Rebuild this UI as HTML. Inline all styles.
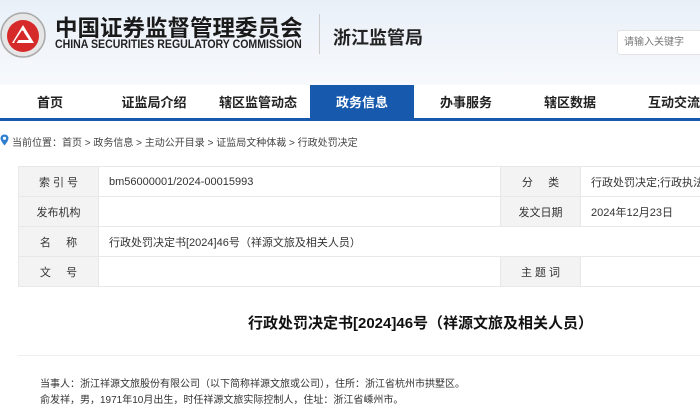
<!DOCTYPE html>
<html><head><meta charset="utf-8"><style>
*{margin:0;padding:0;box-sizing:border-box}
body{width:700px;height:408px;overflow:hidden;background:#fff;font-family:"Liberation Sans","Noto Sans CJK SC",sans-serif;position:relative;color:#333}
.hdr{position:absolute;left:0;top:0;width:700px;height:85px;background:linear-gradient(180deg,#e9f0f8,#f7f9fc)}
.abs{position:absolute;white-space:nowrap}
.nav{position:absolute;left:0;top:85px;width:700px;height:36px;background:#fff;border-bottom:3px solid #1659ad}
.nav div{position:absolute;top:0;height:36px;line-height:36px;font-size:13px;font-weight:bold;color:#222;text-align:center;width:104px}
.nav .on{background:#1659ad;color:#fff}
table{position:absolute;left:18px;top:166px;width:700px;border-collapse:collapse;font-size:11px;table-layout:fixed}
td{border:1px solid #e8e8e8;height:30px;padding:0 10px;color:#333;white-space:nowrap;overflow:hidden}
td.l{background:#f3f3f3;text-align:center}
</style></head><body>
<div class="hdr"></div>
<svg class="abs" style="left:0;top:12px" width="46" height="46" viewBox="0 0 46 46">
<circle cx="23" cy="23" r="22" fill="#e6e6e6" stroke="#aaa" stroke-width="1.5"/>
<circle cx="23" cy="24" r="16" fill="#d62a2a"/>
<path d="M23 13 L34 31 L12 31 Z M23 19 L29 28 L17 28 Z" fill="#fff" fill-rule="evenodd"/>
<path d="M15 31 L23 19" stroke="#d62a2a" stroke-width="2.5"/>
</svg>
<div class="abs" style="left:55px;top:17px;font-size:22.5px;line-height:24px;font-weight:bold;color:#1a1a1a;letter-spacing:0">中国证券监督管理委员会</div>
<div class="abs" style="left:55px;top:38px;font-size:12px;line-height:13px;font-weight:bold;color:#222;transform:scaleX(0.88);transform-origin:left top">CHINA SECURITIES REGULATORY COMMISSION</div>
<div class="abs" style="left:319px;top:14px;width:1px;height:40px;background:#ccc"></div>
<div class="abs" style="left:333px;top:24px;font-size:18px;font-weight:bold;color:#222">浙江监管局</div>
<div class="abs" style="left:617px;top:30px;width:90px;height:25px;background:#fff;border:1px solid #e3e3e3;border-radius:3px;font-size:10px;color:#777;line-height:23px;padding-left:6px">请输入关键字</div>
<div class="nav">
<div style="left:-2px">首页</div><div style="left:102px">证监局介绍</div><div style="left:206px">辖区监管动态</div><div class="on" style="left:310px">政务信息</div><div style="left:414px">办事服务</div><div style="left:518px">辖区数据</div><div style="left:622px">互动交流</div>
</div>
<svg class="abs" style="left:0;top:134px" width="9" height="12" viewBox="0 0 9 12"><path d="M4.5 0.5C2 0.5 0.5 2.3 0.5 4.3 0.5 7 4.5 11.5 4.5 11.5S8.5 7 8.5 4.3C8.5 2.3 7 0.5 4.5 0.5Z" fill="#2f7fd1"/><circle cx="4.5" cy="4.3" r="1.6" fill="#fff"/></svg>
<div class="abs" style="left:12px;top:134px;font-size:10px;color:#444">当前位置：首页 &gt; 政务信息 &gt; 主动公开目录 &gt; 证监局文种体裁 &gt; 行政处罚决定</div>
<table>
<colgroup><col style="width:80px"><col style="width:402px"><col style="width:80px"><col style="width:138px"></colgroup>
<tr><td class="l">索 引 号</td><td>bm56000001/2024-00015993</td><td class="l">分&nbsp;&nbsp;&nbsp;&nbsp;&nbsp;类</td><td>行政处罚决定;行政执法</td></tr>
<tr><td class="l">发布机构</td><td></td><td class="l">发文日期</td><td>2024年12月23日</td></tr>
<tr><td class="l">名&nbsp;&nbsp;&nbsp;&nbsp;&nbsp;称</td><td colspan="3">行政处罚决定书[2024]46号（祥源文旅及相关人员）</td></tr>
<tr><td class="l">文&nbsp;&nbsp;&nbsp;&nbsp;&nbsp;号</td><td></td><td class="l">主 题 词</td><td></td></tr>
</table>
<div class="abs" style="left:248px;top:312px;font-size:15px;color:#111;font-weight:bold">行政处罚决定书[2024]46号（祥源文旅及相关人员）</div>
<div class="abs" style="left:18px;top:355px;width:682px;height:1px;background:#eee"></div>
<div class="abs" style="left:40px;top:377px;font-size:10px;color:#333;line-height:16px">当事人：浙江祥源文旅股份有限公司（以下简称祥源文旅或公司），住所：浙江省杭州市拱墅区。<br>俞发祥，男，1971年10月出生，时任祥源文旅实际控制人，住址：浙江省嵊州市。</div>
</body></html>
